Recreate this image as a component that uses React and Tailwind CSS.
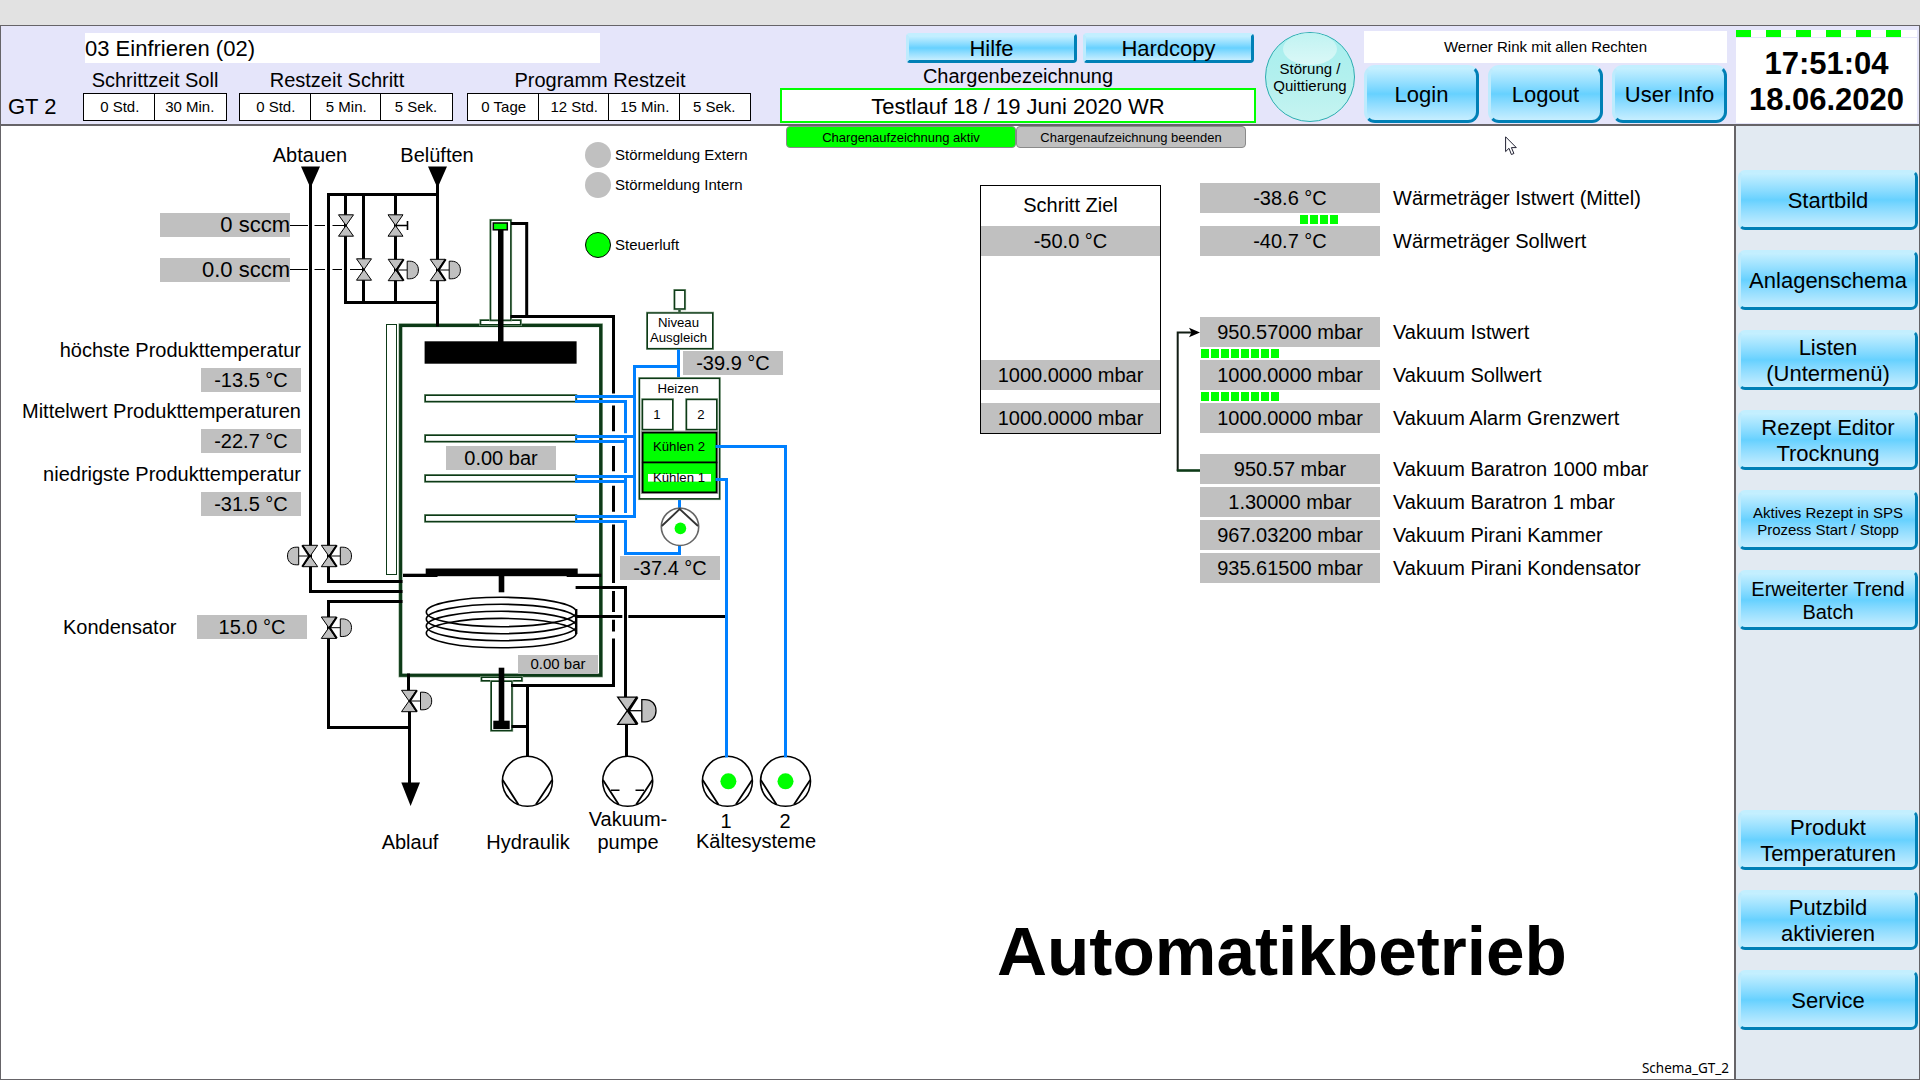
import React from "react";

const BTN =
  "flex items-center justify-center pt-0.5 text-center whitespace-pre-line border-3 border-t-[#c3efff] border-l-[#bdebfd] border-r-[#0080b6] border-b-[#0080b6] bg-linear-to-b from-[#c6f0ff] via-[#66d1ff] to-[#c6eeff]";

function Button({ className, children }) {
  return <button className={`${BTN} ${className}`}>{children}</button>;
}

function TimeGroup({ title, cells, className, titleClass = "" }) {
  return (
    <div className={`flex flex-col ${className}`}>
      <div className={`h-6 text-center text-[20px] leading-6 whitespace-nowrap ${titleClass}`}>{title}</div>
      <div className="mt-px flex h-7 border border-black bg-white text-[15px]">
        {cells.map((c, i) => (
          <div
            key={c}
            className={`flex items-center justify-center ${i < cells.length - 1 ? "w-[70.5px] border-r border-black pl-0.5" : "flex-1 pr-px"}`}
          >
            {c}
          </div>
        ))}
      </div>
    </div>
  );
}

function Header() {
  return (
    <header className="flex h-[101px] shrink-0 border-t border-b-2 border-[#666468] bg-[#e5e5fa]">
      <div className="flex w-[82px] items-end pb-1 pl-[7px] text-[22px] leading-[26px]">GT 2</div>
      <div className="flex w-[668px] flex-col pt-[7px]">
        <div className="ml-0.5 h-[30px] w-[515px] bg-white text-[22px] leading-[31px]">03 Einfrieren (02)</div>
        <div className="mt-[5px] flex">
          <TimeGroup className="w-36" title="Schrittzeit Soll" cells={["0 Std.", "30 Min."]} />
          <TimeGroup className="ml-3 w-[214px]" titleClass="pr-[18px]" title="Restzeit Schritt" cells={["0 Std.", "5 Min.", "5 Sek."]} />
          <TimeGroup className="ml-3.5 w-[284px]" titleClass="pr-[18px]" title="Programm Restzeit" cells={["0 Tage", "12 Std.", "15 Min.", "5 Sek."]} />
        </div>
      </div>
      <div className="ml-[29px] flex w-[476px] flex-col pt-[7px]">
        <div className="flex h-[30px] justify-end gap-1.5 pr-0.5">
          <Button className="w-[171px] rounded-[4px] text-[22px] leading-none">Hilfe</Button>
          <Button className="w-[171px] rounded-[4px] text-[22px] leading-none">Hardcopy</Button>
        </div>
        <div className="h-[25px] text-center text-[20px] leading-[26px]">Chargenbezeichnung</div>
        <div className="h-[35px] border-2 border-[#00ff00] bg-white text-center text-[22px] leading-[33px]">
          Testlauf 18 / 19 Juni 2020 WR
        </div>
      </div>
      <button className="relative mt-1.5 ml-[9px] flex size-[90px] items-center justify-center rounded-full border border-[#2cadb0] bg-linear-to-b from-[#a6eeee] via-[#b2f0ee] to-[#c6f4f1] text-[15px] leading-[17px]">
        <span className="absolute top-0 left-[17px] h-8 w-[54px] rounded-[50%] bg-linear-to-b from-[#c0f3f2] to-[#dbf8f7]" />
        <span className="relative whitespace-nowrap">
          Störung /<br />
          Quittierung
        </span>
      </button>
      <div className="ml-[9px] flex w-[363px] flex-col pt-[5px]">
        <div className="h-8 bg-white text-center text-[15px] leading-8">Werner Rink mit allen Rechten</div>
        <div className="mt-0.5 flex h-[58px] justify-between text-[22px] leading-none">
          <Button className="w-[115px] rounded-[11px]">Login</Button>
          <Button className="w-[115px] rounded-[11px]">Logout</Button>
          <Button className="w-[115px] rounded-[11px]">User Info</Button>
        </div>
      </div>
      <div className="ml-[9px] flex w-[181px] flex-col pt-1">
        <div className="flex h-[7px] gap-[15px] bg-white">
          {[0, 1, 2, 3, 4, 5].map((i) => (
            <div key={i} className="w-[15px] bg-[#00ff00]" />
          ))}
        </div>
        <div className="mt-px flex h-[85px] flex-col bg-white pt-2 text-center text-[31px] leading-9 font-bold">
          <div>17:51:04</div>
          <div>18.06.2020</div>
        </div>
      </div>
    </header>
  );
}

function Sidebar() {
  const b = "h-[60px] w-[180px] rounded-[7px] text-[22px] leading-[26px]";
  return (
    <aside className="flex w-[185px] flex-col border-l-2 border-[#666468] bg-[#e2eaf2] pt-11 pl-0.5">
      <div className="flex flex-col gap-5">
        <Button className={b}>Startbild</Button>
        <Button className={b}>Anlagenschema</Button>
        <Button className={b}>{"Listen\n(Untermenü)"}</Button>
        <Button className={b}>{"Rezept Editor\nTrocknung"}</Button>
        <Button className="h-[60px] w-[180px] rounded-[7px] text-[15px] leading-[17px]">{"Aktives Rezept in SPS\nProzess Start / Stopp"}</Button>
        <Button className="h-[60px] w-[180px] rounded-[7px] text-[20px] leading-[23px]">{"Erweiterter Trend\nBatch"}</Button>
      </div>
      <div className="mt-[180px] flex flex-col gap-5">
        <Button className={b}>{"Produkt\nTemperaturen"}</Button>
        <Button className={b}>{"Putzbild\naktivieren"}</Button>
        <Button className={b}>Service</Button>
      </div>
    </aside>
  );
}

/* Valve body centred on (x, y); kind selects the actuator. */
function Valve({ x, y, kind, flip, s = 1 }) {
  return (
    <g transform={`translate(${x} ${y}) scale(${flip ? -s : s} ${s})`} stroke="#000" strokeWidth="1">
      <path d="M-7.5 -10.7H7.5L-7.5 10.7H7.5Z" fill="#c0c0c0" />
      {kind === "drive" && (
        <>
          <path d="M8 -10.7L1 0L8 10.7" fill="none" strokeWidth="2" />
          <path d="M1 0H11.5" />
          <path d="M11.5 -8.8H14C19.5 -8.8 22.7 -5 22.7 0S19.5 8.8 14 8.8H11.5Z" fill="#c0c0c0" />
        </>
      )}
      {kind === "hand" && <path d="M1 0H12M12 -4.5V4.5" fill="none" strokeWidth="1.6" />}
    </g>
  );
}

/* Dark green frame with a pale outer edge. */
function Frame({ x, y, w, h, t = 1.4 }) {
  return (
    <g fill="#fff">
      <rect x={x} y={y} width={w} height={h} stroke="#8aa68c" strokeWidth={t + 1.2} />
      <rect x={x} y={y} width={w} height={h} stroke="#0d3a17" strokeWidth={t} />
    </g>
  );
}

function Pump({ x, children }) {
  return (
    <g fill="none" stroke="#000" strokeWidth="1.6">
      <circle cx={x} cy="781.3" r="25" fill="#fff" />
      <path d={`M${x - 24.7} 780L${x - 9} 804.5M${x + 24.7} 780L${x + 8.5} 804.5`} strokeWidth="1.8" />
      {children}
    </g>
  );
}

function Schematic() {
  return (
    <svg className="absolute top-0 left-0" width="860" height="900" viewBox="0 0 860 900" fill="none">
      <g stroke="#000" strokeWidth="3">
        <path d="M310.5 180V591.5H402" />
        <path d="M438 194.5H328.5V581.5H402" />
        <path d="M437.5 180V326" />
        <path d="M345.5 194V302.5H439" />
        <path d="M363.5 194V302M395.5 194V302" />
      </g>
      <path d="M301 166.5H320L310.5 188ZM428 166.5H447L437.5 188Z" fill="#000" />
      <path d="M290 225.5H308M314.5 225.5H325M332.5 225.5H346M290 269.5H308M314.5 269.5H325M332.5 269.5H342M350 269.5H364" stroke="#000" />
      <Valve x={346} y={225.5} />
      <Valve x={364} y={269.5} />
      <Valve x={395.5} y={225.5} kind="hand" />
      <Valve x={395.7} y={270} kind="drive" />
      <Valve x={437.7} y={270} kind="drive" />
      <Valve x={310.2} y={556} kind="drive" flip />
      <Valve x={328.8} y={556} kind="drive" />

      <rect x="386.5" y="324.5" width="10" height="250" fill="#fff" stroke="#0d3a17" />
      <Frame x={400.7} y={325.5} w={200} h={349.7} t={3.2} />
      <path d="M390 591.5H402.5M390 581.5H402.5M437.5 318V326.5" stroke="#000" strokeWidth="3" />
      <path d="M402.5 601.5H328.5V727.5H409.5" stroke="#000" strokeWidth="3" />
      <Valve x={328.8} y={627.7} kind="drive" />

      <Frame x={480.6} y={320.3} w={40} h={4.4} />
      <Frame x={490.6} y={220.2} w={20.2} h={100} />
      <path d="M511 223.5H526.7V316.5M510.5 316.5H613.5V393.5M613.5 405.5V431.2M613.5 446V471.2M613.5 485.7V511.7M613.5 524.5V583M613.5 591V612M613.5 619.7V631.5M613.5 638.5V685.5H511" stroke="#000" strokeWidth="3" />
      <rect x="498" y="229" width="5.5" height="114" fill="#000" />
      <rect x="493.3" y="223" width="14" height="6.8" fill="#00ff00" stroke="#000" strokeWidth="1.5" />
      <rect x="424.6" y="341.3" width="152" height="22.4" fill="#000" />
      {[395.3, 435.3, 475.3, 515.3].map((y) => (
        <Frame key={y} x={425.3} y={y} w={150.7} h={6.2} />
      ))}

      <g fill="#000">
        <rect x="403" y="573.7" width="34.5" height="3.3" />
        <rect x="566.7" y="573.7" width="34.6" height="3.3" />
        <rect x="425.7" y="568.5" width="152" height="7.7" />
        <rect x="498.7" y="576" width="5.6" height="16.3" />
      </g>
      <g stroke="#000" strokeWidth="1.6">
        {[612, 619, 626, 633.1].map((y) => (
          <ellipse key={y} cx="501.3" cy={y} rx="75" ry="14.7" />
        ))}
        <path d="M576.2 609V634" strokeWidth="2.4" />
      </g>
      <path d="M577 616.5H622.3M628.3 616.5H726.5M575.6 587.5H625.5V698M626.5 722V757" stroke="#000" strokeWidth="3" />
      <Valve x={627.2} y={710.7} kind="drive" s={1.27} />

      <Frame x={481.6} y={677.3} w={40.2} h={3.4} />
      <Frame x={491.3} y={681.3} w={20.6} h={49.2} />
      <rect x="498.7" y="667.7" width="5.6" height="54" fill="#000" />
      <rect x="493.3" y="720.7" width="16.4" height="8.3" fill="#000" />
      <path d="M511.5 726.5H527.5M527.5 685.5V757M511 685.5H540" stroke="#000" strokeWidth="3" />

      <path d="M408.5 673.5V691M409.5 711V784" stroke="#000" strokeWidth="3" />
      <Valve x={409} y={701} kind="drive" />
      <path d="M401.3 782.5H420L410.6 806Z" fill="#000" />

      <path d="M679.5 309V313" stroke="#0d3a17" strokeWidth="2.5" />
      <Frame x={674.6} y={290.3} w={10.2} h={18.6} />
      <Frame x={647.3} y={313} w={65.4} h={35.6} />
      <path d="M678.5 349.4V378M678.5 366.5H634.5V518M679.5 498V508.5M679.5 546V553.5H625.5V521.6M625.5 401V433.2M625.5 437V473M625.5 477V513" stroke="#0080ff" strokeWidth="3" />
      <path d="M575 396.5H635M575 401.5H627M575 436.5H635M575 441.5H627M575 476.5H635M575 481.5H627M575 516.5H636M575 521.5H627" stroke="#0080ff" strokeWidth="3" />

      <Frame x={639.5} y={378.4} w={80} h={120.4} />
      <Frame x={642.5} y={399.5} w={30.2} h={30} />
      <Frame x={686.5} y={399.5} w={30.2} h={30} />
      <g stroke="#8f968f" strokeWidth="3.2">
        <rect x="642.5" y="432.3" width="74.2" height="60" />
      </g>
      <g fill="#00ff00" stroke="#000" strokeWidth="1.6">
        <rect x="642.7" y="432.7" width="73.8" height="29.8" />
        <rect x="642.7" y="462.5" width="73.8" height="29.8" />
      </g>
      <rect x="648" y="474" width="63" height="7.6" fill="#fff" />
      <path d="M715.5 446.5H785.5V757M715.5 479.5H726.5V757" stroke="#0080ff" strokeWidth="3" />

      <circle cx="680" cy="526.8" r="18.7" fill="#fff" stroke="#666" strokeWidth="1.6" />
      <path d="M661.8 526L679.7 509L698 526" stroke="#333" strokeWidth="1.8" />
      <circle cx="680.4" cy="528.4" r="5.8" fill="#00ff00" />

      <Pump x={527.4} />
      <Pump x={627.7}>
        <path d="M611 790.3H619.5M635.5 790.3H644" />
      </Pump>
      <Pump x={727.4} />
      <Pump x={785.5} />
      <path d="M726.5 750V757.5M785.5 750V757.5" stroke="#0080ff" strokeWidth="3" />
      <circle cx="728.4" cy="781.3" r="8" fill="#00ff00" />
      <circle cx="785.5" cy="781.3" r="8" fill="#00ff00" />

      <circle cx="598" cy="155" r="13" fill="#c0c0c0" />
      <circle cx="598" cy="185" r="13" fill="#c0c0c0" />
      <circle cx="598" cy="245" r="12.5" fill="#00ff00" stroke="#000" />
    </svg>
  );
}

const V = "absolute bg-[#c0c0c0] text-center h-6 text-[20px] leading-6 whitespace-nowrap";
const L = "absolute text-[20px] leading-6 whitespace-nowrap";
const C = "absolute text-[20px] leading-6 whitespace-nowrap text-center";
const S = "absolute text-[13.2px] leading-[15px] text-center whitespace-pre-line";

function Plant() {
  return (
    <section className="relative w-[785px] shrink-0">
      {/* drawing canvas shares its origin with the window */}
      <div className="absolute -top-[126px] -left-px h-[900px] w-[860px]">
        <Schematic />
        <div className={`${C} top-[143px] left-[260px] w-[100px]`}>Abtauen</div>
        <div className={`${C} top-[143px] left-[387px] w-[100px]`}>Belüften</div>
        <div className="absolute top-[213px] left-[160px] h-6 w-[130px] bg-[#c0c0c0] text-right text-[22px] leading-6">0 sccm</div>
        <div className="absolute top-[258px] left-[160px] h-6 w-[130px] bg-[#c0c0c0] text-right text-[22px] leading-6">0.0 sccm</div>

        <div className={`${L} top-[338px] left-[1px] w-[300px] text-right`}>höchste Produkttemperatur</div>
        <div className={`${V} top-[368px] left-[201px] w-[100px]`}>-13.5 °C</div>
        <div className={`${L} top-[399px] left-[1px] w-[300px] text-right`}>Mittelwert Produkttemperaturen</div>
        <div className={`${V} top-[429px] left-[201px] w-[100px]`}>-22.7 °C</div>
        <div className={`${L} top-[462px] left-[1px] w-[300px] text-right`}>niedrigste Produkttemperatur</div>
        <div className={`${V} top-[492px] left-[201px] w-[100px]`}>-31.5 °C</div>
        <div className={`${L} top-[615px] left-[63px]`}>Kondensator</div>
        <div className={`${V} top-[615px] left-[197px] w-[110px]`}>15.0 °C</div>

        <div className={`${V} top-[446px] left-[446px] w-[110px]`}>0.00 bar</div>
        <div className="absolute top-[655px] left-[518px] h-[19px] w-[80px] bg-[#c0c0c0] text-center text-[15px] leading-[18px]">0.00 bar</div>
        <div className={`${V} top-[351px] left-[683px] w-[100px]`}>-39.9 °C</div>
        <div className={`${V} top-[556px] left-[620px] w-[100px]`}>-37.4 °C</div>

        <div className="absolute top-[146px] left-[615px] text-[15px] leading-[18px] whitespace-nowrap">Störmeldung Extern</div>
        <div className="absolute top-[176px] left-[615px] text-[15px] leading-[18px] whitespace-nowrap">Störmeldung Intern</div>
        <div className="absolute top-[236px] left-[615px] text-[15px] leading-[18px] whitespace-nowrap">Steuerluft</div>

        <div className={`${S} top-[315px] left-[648px] w-[61px]`}>{"Niveau\nAusgleich"}</div>
        <div className={`${S} top-[381px] left-[648px] w-[60px]`}>Heizen</div>
        <div className={`${S} top-[407px] left-[647px] w-[20px]`}>1</div>
        <div className={`${S} top-[407px] left-[691px] w-[20px]`}>2</div>
        <div className={`${S} top-[439px] left-[643px] w-[72px]`}>Kühlen 2</div>
        <div className={`${S} top-[470px] left-[643px] w-[72px]`}>Kühlen 1</div>

        <div className={`${C} top-[830px] left-[360px] w-[100px]`}>Ablauf</div>
        <div className={`${C} top-[830px] left-[478px] w-[100px]`}>Hydraulik</div>
        <div className={`${C} top-[807px] left-[578px] w-[100px]`}>Vakuum-</div>
        <div className={`${C} top-[830px] left-[578px] w-[100px]`}>pumpe</div>
        <div className={`${C} top-[809px] left-[716px] w-[20px]`}>1</div>
        <div className={`${C} top-[809px] left-[775px] w-[20px]`}>2</div>
        <div className={`${C} top-[829px] left-[686px] w-[140px]`}>Kältesysteme</div>
      </div>
    </section>
  );
}

function Reading({ value, label }) {
  return (
    <div className="flex h-[30px] text-[20px] leading-[31px]">
      <div className="w-[180px] bg-[#c0c0c0] text-center">{value}</div>
      <div className="ml-[13px] whitespace-nowrap">{label}</div>
    </div>
  );
}

function Segments({ count, className }) {
  return (
    <div className={`flex h-[13px] items-center gap-0.5 ${className}`}>
      {Array.from({ length: count }, (_, i) => (
        <div key={i} className="h-[9px] w-2 bg-[#00ff00]" />
      ))}
    </div>
  );
}

function Readings() {
  const field = "h-[30px] bg-[#c0c0c0] text-center text-[20px] leading-[31px]";
  return (
    <div className="mt-[35px] flex pl-[194px]">
      <div className="mt-0.5 h-[249px] w-[181px] border border-black">
        <div className="h-10 text-center text-[20px] leading-[38px]">Schritt Ziel</div>
        <div className={field}>-50.0 °C</div>
        <div className={`${field} mt-[104px]`}>1000.0000 mbar</div>
        <div className={`${field} mt-[13px]`}>1000.0000 mbar</div>
      </div>
      <svg width="39" height="300" viewBox="1161 183 39 300" fill="none">
        <path d="M1177.7 471V332.5H1197" stroke="#111c13" strokeWidth="2" />
        <path d="M1176.8 470.5H1200" stroke="#0d3a17" strokeWidth="2.6" />
        <path d="M1200 332.5L1189 327.8L1191.5 332.5L1189 337.2Z" fill="#000" />
      </svg>
      <div className="flex flex-col">
        <Reading value="-38.6 °C" label="Wärmeträger Istwert (Mittel)" />
        <Segments count={4} className="pl-[100px]" />
        <Reading value="-40.7 °C" label="Wärmeträger Sollwert" />
        <div className="mt-[61px]" />
        <Reading value="950.57000 mbar" label="Vakuum Istwert" />
        <Segments count={8} className="pl-px" />
        <Reading value="1000.0000 mbar" label="Vakuum Sollwert" />
        <Segments count={8} className="pl-px" />
        <Reading value="1000.0000 mbar" label="Vakuum Alarm Grenzwert" />
        <div className="mt-[21px] flex flex-col gap-[3px]">
          <Reading value="950.57 mbar" label="Vakuum Baratron 1000 mbar" />
          <Reading value="1.30000 mbar" label="Vakuum Baratron 1 mbar" />
          <Reading value="967.03200 mbar" label="Vakuum Pirani Kammer" />
          <Reading value="935.61500 mbar" label="Vakuum Pirani Kondensator" />
        </div>
      </div>
    </div>
  );
}

export default function App() {
  return (
    <div className="flex h-[1080px] w-[1920px] flex-col overflow-hidden bg-[#e2e2e2] pt-[25px] font-['Liberation_Sans',Arial,sans-serif] text-black">
      <div className="flex flex-1 flex-col border-x border-b border-[#666468] bg-white">
        <Header />
        <div className="flex flex-1">
          <main className="relative flex w-[1733px]">
            <Plant />
            <div className="flex flex-1 flex-col">
              <div className="flex text-[13px] leading-5">
                <button className="h-[22px] w-[230px] rounded-[4px] border border-[#8a8a8a] bg-[#00ff00] pt-px">Chargenaufzeichnung aktiv</button>
                <button className="h-[22px] w-[230px] rounded-[4px] border border-[#8a8a8a] bg-[#c0c0c0] pt-px">Chargenaufzeichnung beenden</button>
              </div>
              <Readings />
              <h1 className="mt-[328px] ml-[211px] text-[69.3px] leading-20 font-bold">Automatikbetrieb</h1>
              <div className="mt-auto pr-[5px] pb-[3px] text-right font-['Noto_Sans',sans-serif] text-[13.5px] leading-4">Schema_GT_2</div>
            </div>
            <svg className="absolute top-2.5 left-[1504px]" width="13" height="20" viewBox="0 0 13 20">
              <path d="M.6 .8V15.6L4 12.3L6.4 18.5L8.9 17.5L6.4 11.6H11.3Z" fill="#fff" stroke="#223" strokeWidth="1" />
            </svg>
          </main>
          <Sidebar />
        </div>
      </div>
    </div>
  );
}
